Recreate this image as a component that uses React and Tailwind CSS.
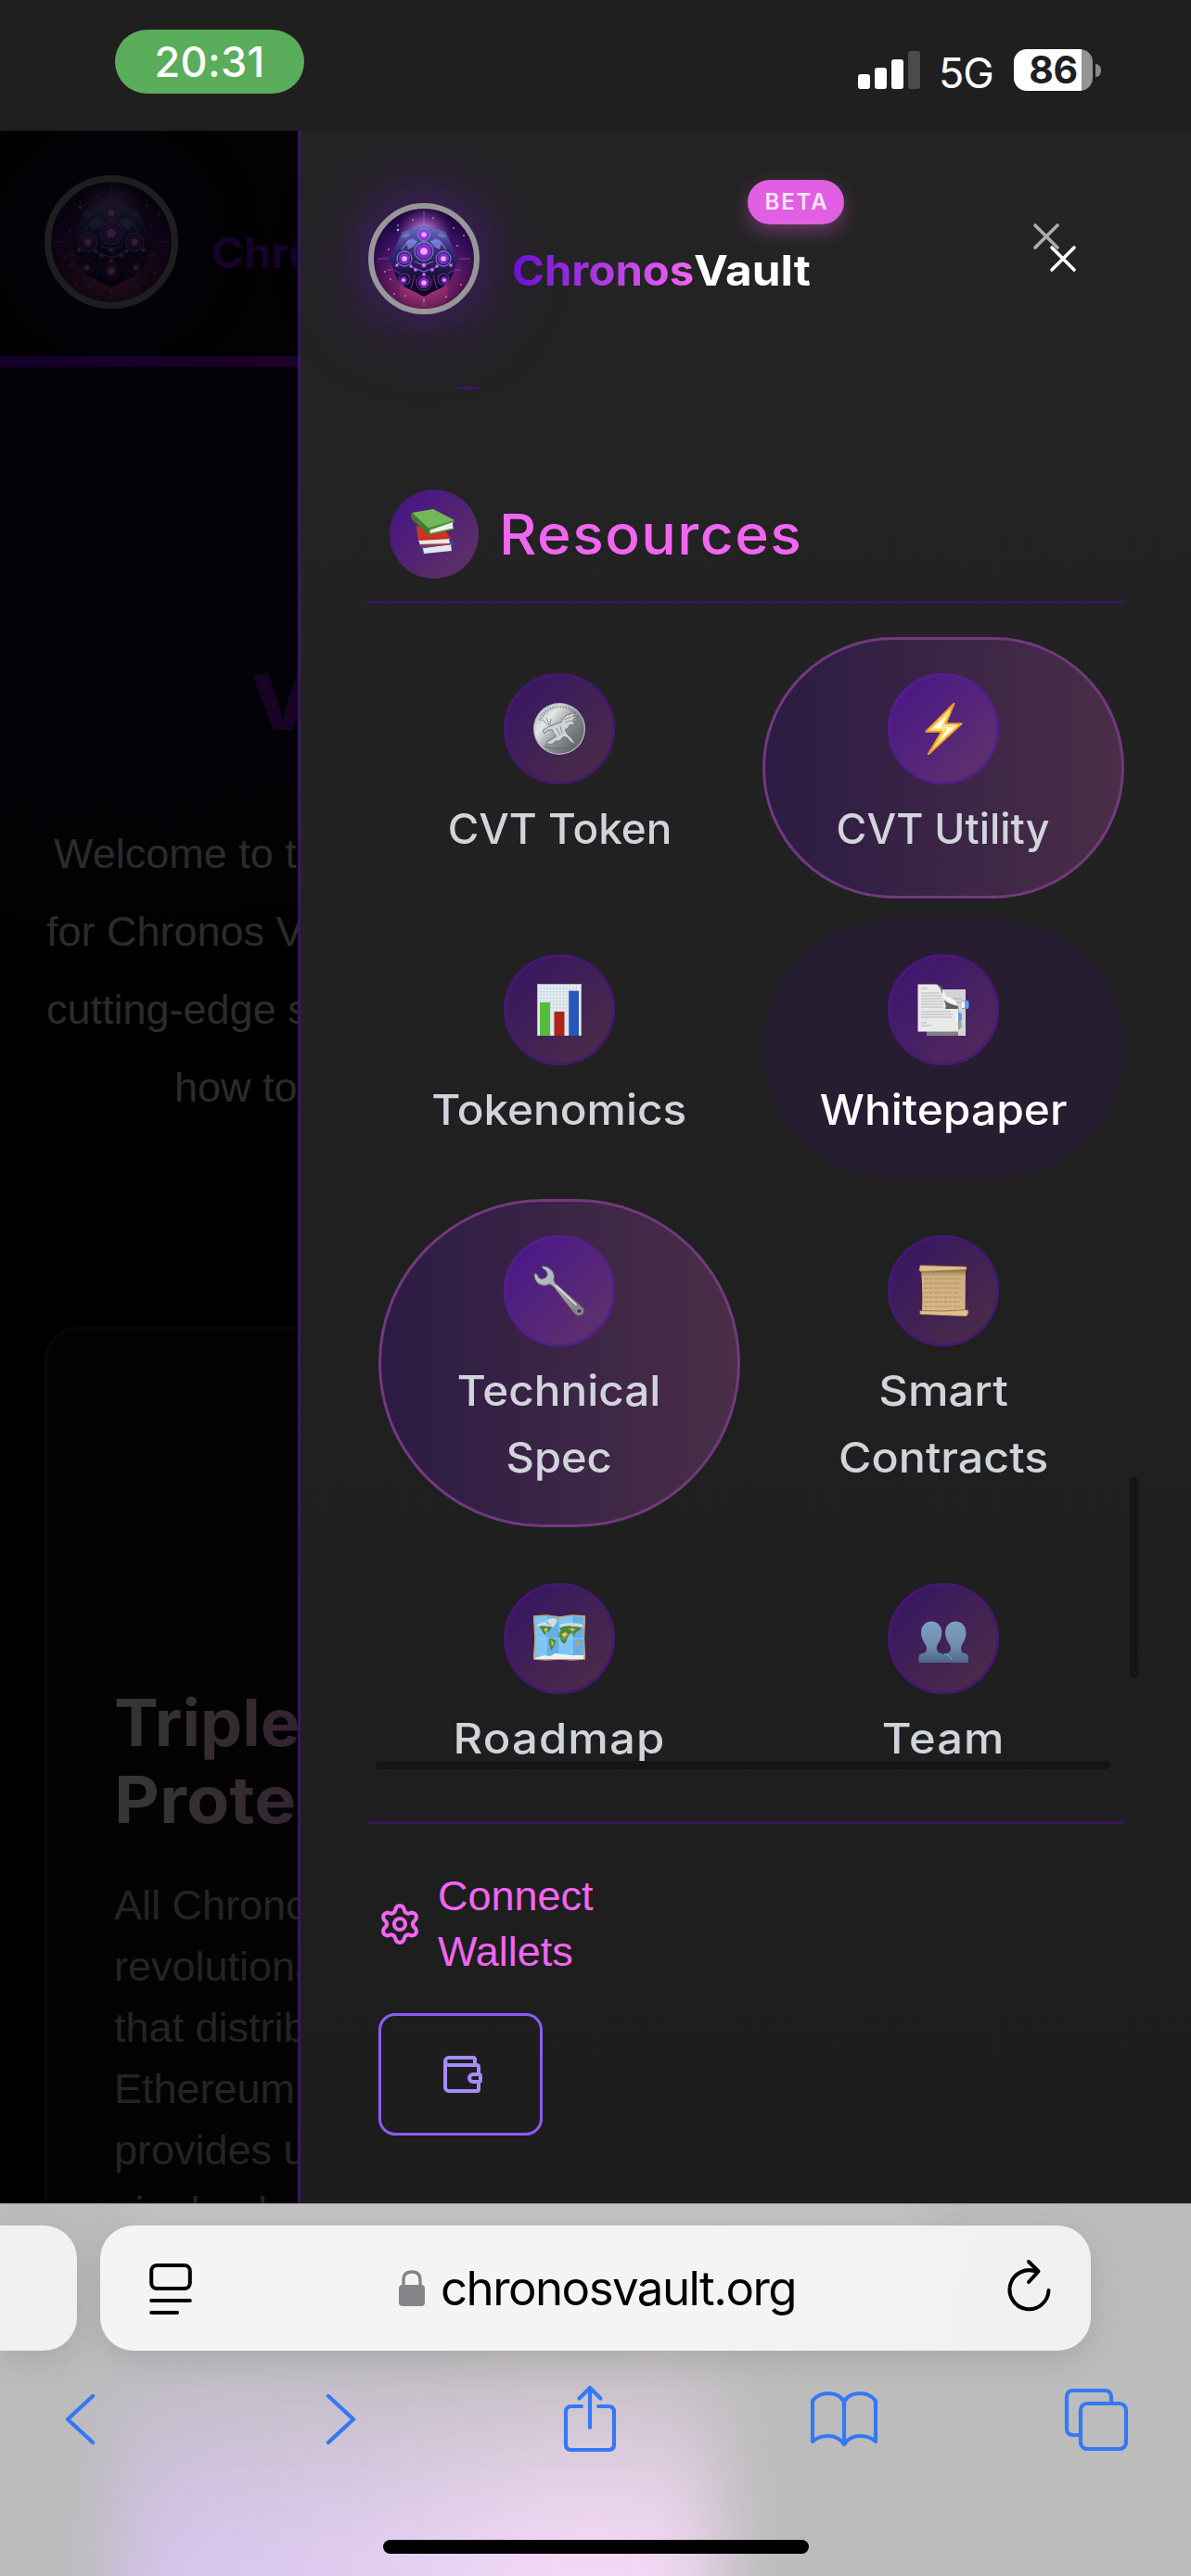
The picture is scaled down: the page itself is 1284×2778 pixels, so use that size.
import React from "react";
import { Settings, Wallet } from "lucide-react";

/* ---------- Brand orb ---------- */

const NODES = [
  [60, 34, 4], [60, 52, 5.5], [39, 60, 4], [81, 60, 4], [60, 86, 4],
  [38, 83, 2.5], [82, 83, 2.5], [60, 67, 2], [51, 72, 1.6], [69, 72, 1.6],
  [46, 68, 1.4], [74, 68, 1.4], [31, 67, 1.6], [89, 67, 1.6], [60, 77, 1.6],
];
const SPARKS = [
  [32, 24], [22, 50], [96, 46], [92, 27], [40, 100], [84, 101], [18, 74],
  [103, 35], [70, 16], [28, 98], [60, 105], [24, 82], [100, 88], [48, 18],
];

function Orb({ id, className }) {
  return (
    <svg viewBox="0 0 120 120" className={className}>
      <defs>
        <linearGradient id={id + "bg"} x1="0" y1="0" x2="0" y2="1">
          <stop offset="0" stopColor="#1d0a45" />
          <stop offset="0.4" stopColor="#43136f" />
          <stop offset="0.7" stopColor="#75206f" />
          <stop offset="1" stopColor="#b03575" />
        </linearGradient>
        <radialGradient id={id + "edge"}>
          <stop offset="0.6" stopColor="#10042a" stopOpacity="0" />
          <stop offset="1" stopColor="#10042a" stopOpacity="0.6" />
        </radialGradient>
        <radialGradient id={id + "glow"}>
          <stop offset="0" stopColor="#ffb0ff" />
          <stop offset="1" stopColor="#d95cff" stopOpacity="0" />
        </radialGradient>
        <linearGradient id={id + "ball"} x1="0" y1="0" x2="0" y2="1">
          <stop offset="0" stopColor="#6d6fc4" />
          <stop offset="0.35" stopColor="#382a78" />
          <stop offset="0.7" stopColor="#1c1038" />
          <stop offset="1" stopColor="#0d0418" />
        </linearGradient>
      </defs>
      <circle cx="60" cy="60" r="57" fill={"url(#" + id + "bg)"} />
      <circle cx="60" cy="30" r="30" fill={"url(#" + id + "glow)"} opacity="0.8" />
      <circle cx="60" cy="96" r="26" fill="#f04a96" opacity="0.28" />
      <circle cx="60" cy="60" r="57" fill={"url(#" + id + "edge)"} />
      <path d="M60 8V112M10 60H110M20 72H100" stroke="#c77bff" strokeWidth="0.7" opacity="0.6" />
      <path
        d="M60 24L71 27L83 31L88 41L92 50L95 56L99 60L95 65L92 75L88 84L80 91L69 96L60 101L51 96L40 91L32 84L28 75L25 65L21 60L25 56L28 50L32 41L37 31L49 27Z"
        fill={"url(#" + id + "ball)"}
      />
      <g fill="none" stroke="#8a86df" strokeWidth="1.3" opacity="0.75">
        <circle cx="60" cy="52" r="10" />
        <circle cx="39" cy="60" r="8" />
        <circle cx="81" cy="60" r="8" />
        <circle cx="60" cy="34" r="6.5" />
        <path d="M36 50L44 40L52 43M84 50L76 40L68 43M44 68L60 74L76 68M50 63L60 67L70 63" />
      </g>
      <g fill="none" stroke="#5a3aa0" strokeWidth="1.2" opacity="0.8">
        <circle cx="60" cy="86" r="8" />
        <circle cx="39" cy="82" r="6" />
        <circle cx="81" cy="82" r="6" />
        <path d="M46 92L50 78M74 92L70 78M28 72L34 76M92 72L86 76" />
      </g>
      <path d="M41 42L47 38L53 41L49 47L43 50ZM79 42L73 38L67 41L71 47L77 50Z" fill="#7f8fdc" opacity="0.75" />
      <path d="M35 36L42 32L46 34L40 38ZM85 36L78 32L74 34L80 38Z" fill="#6d84c8" opacity="0.75" />
      {NODES.map(([x, y, r]) => (
        <g key={x + "-" + y}>
          <circle cx={x} cy={y} r={r * 1.5} fill="#9a35ee" opacity="0.7" />
          <circle cx={x} cy={y} r={r * 0.7} fill="#ffa0f0" />
        </g>
      ))}
      {SPARKS.map(([x, y]) => (
        <circle key={x + "s" + y} cx={x} cy={y} r="0.9" fill="#f06ac8" />
      ))}
      <circle cx="32" cy="29" r="1.2" fill="#7ad7ff" />
      <circle cx="60" cy="60" r="57" fill="none" stroke="#979797" strokeWidth="6" />
    </svg>
  );
}

/* ---------- Pictograms ---------- */

const Books = () => (
  <svg viewBox="0 0 48 50" className="h-[50px] w-12">
    <path d="M0 18L5 20L10 40L14 49L44 45L45 34L30 26L6 20Z" fill="#2b46a0" />
    <path d="M13 42L43 38L44 45L14 48Z" fill="#e4e6ea" />
    <path d="M12 41L44 36L45 38L14 42Z" fill="#3453b8" />
    <path d="M6 18L38 24L42 31L8 33Z" fill="#cf3324" />
    <path d="M8 33L41 31L42 38L10 39Z" fill="#e9e6e4" />
    <path d="M7 32L43 30V32L9 34ZM9 38L42 37V38.500L11 40Z" fill="#c33022" />
    <path d="M1 4L24 0L47 12L20 22Z" fill="#74b65a" />
    <path d="M1 4L20 22L19 28L2 12Q-1 8 1 4Z" fill="#3c7c2c" />
    <path d="M20 21L46 13Q44 17 46 21L21 27Z" fill="#f0f0ee" />
    <path d="M19 20L47 12V13.500L21 22.500Q19 24 21 26L46 20.500V22L19 28Z" fill="#4a8f37" />
  </svg>
);

const Coin = () => (
  <svg viewBox="0 0 56 56" className="size-14">
    <defs>
      <linearGradient id="coin" x1="0" y1="0" x2="1" y2="0.8">
        <stop offset="0" stopColor="#a9adb0" />
        <stop offset="0.32" stopColor="#e2e7ea" />
        <stop offset="0.62" stopColor="#8b8f92" />
        <stop offset="1" stopColor="#5c5f62" />
      </linearGradient>
    </defs>
    <circle cx="28" cy="28" r="28" fill="#b9bcbe" />
    <circle cx="28" cy="28" r="26.800" fill="url(#coin)" />
    <path d="M7 19A23 23 0 0 1 46 12" fill="none" stroke="#6d7174" strokeWidth="3" strokeDasharray="1.500 1.300" opacity="0.6" />
    <path d="M10 30Q16 25 21 24Q25 22 30 21Q30 17 36 13L46 10L43 14L49 15L43 17L49 19L42 20L46 23L39 24Q38 28 34 29Q36 34 41 38L46 45L40 42L37 38Q33 35 31 38Q29 42 24 41L20 45L17 44L13 46L15 42L20 39L25 36Q21 33 20 29Q15 28 12 33Z" fill="#cfd3d6" stroke="#6a6e71" strokeWidth="0.900" />
    <path d="M10 18L15 24M14 16L17 24M19 17L18 24M33 18L44 14M34 21L45 18M25 27L29 35M29 25L31 33" stroke="#8d9194" strokeWidth="1" />
    <path d="M12 47Q28 52 44 46" stroke="#66696c" strokeWidth="1" fill="none" />
    <path d="M40 34H50" stroke="#6f7376" strokeWidth="2.500" strokeDasharray="1.500 1" />
  </svg>
);

const Bolt = () => (
  <svg viewBox="0 0 56 56" className="size-14">
    <path d="M39.300 1L30.500 22.500H47.500L11.900 55.200L26.500 30.800H9.500Z" fill="#fff3a6" stroke="#ee9d2e" strokeWidth="2.200" strokeLinejoin="round" />
    <path d="M35 10L26.500 25.500H42L20 46L31 28.300H14Z" fill="#ffffea" stroke="#fbd95a" strokeWidth="1.500" />
  </svg>
);

const Chart = () => (
  <svg viewBox="0 0 56 56" className="size-14">
    <rect x="4.500" y="0.500" width="47" height="55.500" fill="#e9eef1" stroke="#b9b0bd" />
    <path d="M8 1V56M11.500 1V56M15 1V56M18.500 1V56M22 1V56M25.500 1V56M29 1V56M32.500 1V56M36 1V56M39.500 1V56M43 1V56M46.500 1V56M5 5H51M5 8.500H51M5 12H51M5 15.500H51M5 19H51M5 22.500H51M5 26H51M5 29.500H51M5 33H51M5 36.500H51M5 40H51M5 43.500H51M5 47H51M5 50.500H51" stroke="#c3d3df" strokeWidth="0.700" />
    <path d="M7 20H18V56H7Z" fill="#56bb3c" />
    <path d="M22.500 30H33.500V56H22.500Z" fill="#af2318" />
    <path d="M38.200 7.500H49V56H38.200Z" fill="#2558b8" />
  </svg>
);

const Pages = () => (
  <svg viewBox="0 0 56 56" className="size-14">
    <path d="M10 6H52V56H10Z" fill="#d4d4d4" />
    <path d="M10 51H44V56H10Z" fill="#818181" />
    <path d="M43 20L48 46L43 51Z" fill="#9c9c9c" />
    <path d="M36 16H48M40 20H48" stroke="#a8a8a8" />
    <path d="M0.500 0.500H20Q26 1 27 8L29 14Q40 14 44 24V51.500H0.500Z" fill="#e9e9e9" />
    <path d="M20 0.500Q24 2 25 8Q28 18 44 24Q40 14 31 14Q27 2 20 0.500Z" fill="#f7f7f7" />
    <path d="M20 0Q26 1 27 6L27 12Q25 3 20 0ZM28 17Q34 22 44 24V27H30Q32 22 28 17Z" fill="#5e5e5e" />
    <path d="M4 5H11M4 10H24M4 13H26M4 16H27M4 19H28M4 22H28M4 25H28M4 30H36M4 33H38M4 36H37M4 42H10M4 45H15" stroke="#b8b8b8" strokeWidth="1.200" />
    <path d="M48.500 18H54Q55.500 18 55.500 20V25Q55.500 27 54 27H48.500ZM44 31H46Q48 31 48 33V38Q48 40 46 40H44Z" fill="#5f9ce6" />
    <path d="M48 19H51V26H48ZM41 32H44V40H41Z" fill="#f4f6fa" />
  </svg>
);

const Wrench = () => (
  <svg viewBox="0 0 56 56" className="size-14">
    <defs>
      <linearGradient id="steel" x1="0" y1="0" x2="1" y2="1">
        <stop offset="0" stopColor="#b9c9d6" />
        <stop offset="0.5" stopColor="#a9a9b0" />
        <stop offset="1" stopColor="#7d7273" />
      </linearGradient>
    </defs>
    <path
      d="M9 1Q16 1 21 7Q24 12 22 17L24 20L50 43Q55 46 55 50Q54 55 49 55Q45 55 43 51L22 24L18 21Q12 24 6 21Q0 16 1 9L4 10Q6 16 10 15Q15 14 15 10Q15 6 10 4Z"
      fill="url(#steel)" stroke="#58505f" strokeWidth="1"
    />
    <path d="M25 23L46 43" stroke="#e3e3e8" strokeWidth="1.600" strokeLinecap="round" />
    <ellipse cx="49.500" cy="49.800" rx="3" ry="2.700" fill="#543068" stroke="#c4bcc4" strokeWidth="0.800" />
  </svg>
);

const Scroll = () => (
  <svg viewBox="0 0 56 56" className="size-14">
    <defs>
      <linearGradient id="paper" x1="0" y1="0" x2="0" y2="1">
        <stop offset="0" stopColor="#9b7a50" />
        <stop offset="0.15" stopColor="#cfae7e" />
        <stop offset="1" stopColor="#d8b888" />
      </linearGradient>
    </defs>
    <path d="M4 6H52L51.500 50H5Q6 28 4 6Z" fill="url(#paper)" />
    <path d="M3 0.500L53 2V5.500L4 7.500Q1 7 2 4Z" fill="#e0bd8c" stroke="#82603d" strokeWidth="0.800" />
    <path d="M2.500 49.500Q28 51 53 48.500Q56 49 55 52L53 55.500L3 53.500Z" fill="#e2c08f" stroke="#82603d" strokeWidth="0.800" />
    <path d="M7 15H47M7 20H46M7 25H48M7 30H45M7 35H48M7 40H46M7 45H48" stroke="#b08c60" strokeWidth="1.200" strokeDasharray="5 1 3 1.500" />
  </svg>
);

const WorldMap = () => (
  <svg viewBox="0 0 56 56" className="size-14">
    <path d="M0.500 4L14 3L28 5L42 3L55.500 4L54.500 28L55.500 50L42 51L28 50L14 51L0.500 50L2 28Z" fill="#7cc6f5" stroke="#c79f74" strokeWidth="1.500" />
    <path d="M14 4L28 6V50L14 50ZM42 4L54 5V49L42 50Z" fill="#4a95cf" opacity="0.45" />
    <path d="M14 8Q22 4 26 8Q24 14 21 16L17 12ZM4 13L12 10L18 14L20 12L22 15H4ZM28 13L38 11L52 12L54 16L44 15L30 17Z" fill="#d6dbdb" />
    <path d="M6 15Q12 13 20 16L17 20L13 22L15 25L11 23Q9 18 6 15ZM17 28Q22 27 24 31Q22 38 19 41Q17 34 17 28ZM28 17Q34 13 44 15L52 16Q50 20 46 21L44 26L41 22L38 24L36 30Q34 36 31 32L27 26Q26 21 30 20Z" fill="#4b873b" />
    <path d="M11 17L16 18L13 21ZM19 30L22 32L20 37ZM30 23L35 21L37 24L33 27ZM38 17L46 18L42 20Z" fill="#e9c556" />
    <path d="M45 32L50 31L50 35L45 35Z" fill="#e59a3d" />
    <path d="M2 49L12 46L18 47L24 44L40 46L54 46V50H2Z" fill="#eef3f5" />
    <path d="M1 28H55M14 4V50M28 6V50M42 4V50" stroke="#a8def8" strokeWidth="0.700" opacity="0.700" />
  </svg>
);

const People = () => (
  <svg viewBox="0 0 56 56" className="size-14">
    <defs>
      <linearGradient id="silhouette" x1="0" y1="9" x2="0" y2="54" gradientUnits="userSpaceOnUse">
        <stop offset="0" stopColor="#7e9fc0" />
        <stop offset="0.6" stopColor="#6f8daf" />
        <stop offset="1" stopColor="#4b678a" />
      </linearGradient>
    </defs>
    <path
      d="M15.300 9.500C22 9.500 26.500 15 26.300 22C26 29 22.500 33 21 36Q20 42 24 43.500L28.500 45L33 43.500Q37 42 35.500 36C34 33 30.300 29 30 22C29.800 15 34.500 9.500 41.300 9.500C48 9.500 52.800 15 52.500 22C52.300 29 49 33 47.500 36Q46 42 49.500 43.500L53 44.500Q55 45.500 55 48V54H1.500V48Q1.500 45.500 3.500 44.500L7.500 43.500Q11 42 9.500 36C8 33 4.300 29 4 22C3.800 15 8.500 9.500 15.300 9.500Z"
      fill="url(#silhouette)"
    />
    <path d="M29 44.800Q36 46 37 51" fill="none" stroke="#8facca" strokeWidth="0.900" />
  </svg>
);

/* ---------- Status bar ---------- */

function StatusBar() {
  return (
    <header className="flex h-[141px] shrink-0 items-start bg-[#1f1f1f] text-white">
      <div className="mt-8 ml-[124px] flex h-[69px] w-[204px] items-center justify-center rounded-full bg-[#59ad5b] text-[45px] leading-none font-medium tracking-[0.3px]">
        20:31
      </div>
      <div className="mt-[55px] ml-[597px] flex h-[41px] items-end gap-[5px]">
        <i className="h-4 w-[13px] rounded-[3px] bg-white" />
        <i className="h-[23px] w-[13px] rounded-[3px] bg-white" />
        <i className="h-8 w-[13px] rounded-[3px] bg-white" />
        <i className="h-[41px] w-[13px] rounded-[3px] bg-[#4b4b4b]" />
      </div>
      <div className="mt-[54px] ml-[20px] w-[81px] text-[45px] leading-[50px] font-normal tracking-[-1.2px]">5G</div>
      <div className="mt-[53px] flex items-center gap-[3px]">
        <div className="flex h-[45px] w-[85px] items-center justify-center rounded-[14px] bg-[linear-gradient(90deg,#fff_73px,#949494_73px)] text-[41px] leading-none font-bold tracking-[-0.5px] text-[#1f1f1f]">
          86
        </div>
        <i className="h-3.5 w-1.5 rounded-r-full bg-[#8a8a8a]" />
      </div>
    </header>
  );
}

/* ---------- Dimmed page behind the drawer ---------- */

function PageBehind() {
  return (
    <div className="w-[321px] shrink-0 overflow-hidden bg-black whitespace-nowrap">
      <div className="flex h-[243px] items-start bg-[#020203] pt-12 pl-12">
        <div className="size-36 shrink-0 rounded-full shadow-[0_0_90px_10px_rgba(60,10,110,0.16)]">
          <Orb id="back" className="size-36 opacity-[0.19]" />
        </div>
        <div className="mt-[54px] ml-9 origin-left scale-x-[1.05] text-[45px] leading-[60px] font-bold text-[#17022c]">Chronos</div>
      </div>
      <div className="h-3 bg-[linear-gradient(90deg,#15002a,#1b0028)]" />
      <div className="h-[1035px] bg-[radial-gradient(ellipse_900px_640px_at_30%_0%,#050209_0%,#030207_60%,#020204_90%,#000_100%)]">
        <h1 className="origin-left scale-x-[1.08] pt-[311px] pl-[250px] text-[83px] leading-[100px] font-extrabold text-[#180326]">Vault</h1>
        <p className="pt-[72px] pl-[50px] font-['Liberation_Sans',sans-serif] text-[45px] leading-[84px] text-[#2b2b2b]">
          <span className="block pl-[8px]">Welcome to the</span>
          <span className="block">for Chronos Vault</span>
          <span className="block">cutting-edge security</span>
          <span className="block pl-[138px]">how to use</span>
        </p>
      </div>
      <div className="ml-12 h-[1000px] w-[600px] rounded-tl-[36px] border-[3px] border-[#080808] bg-[#030303] pt-[382px] pl-[72px]">
        <h2 className="flex flex-col items-start text-[70px] leading-[83px] font-bold text-transparent">
          <span className="origin-left scale-x-[1.025] bg-[linear-gradient(90deg,#353535_10%,#34222f)] bg-clip-text">Triple</span>
          <span className="origin-left scale-x-[1.08] bg-[linear-gradient(90deg,#353535_10%,#34222f_85%)] bg-clip-text">Protect</span>
        </h2>
        <p className="pt-[40px] font-['Liberation_Sans',sans-serif] text-[45px] leading-[66px] text-[#242424]">
          All Chronos
          <br />
          revolutionary
          <br />
          that distributes
          <br />
          Ethereum
          <br />
          provides un
          <br />
          single-chain
        </p>
      </div>
    </div>
  );
}

/* ---------- Drawer ---------- */

const ITEMS = [
  { icon: Coin, lines: [["CVT Token", "scale-x-[1.02]"]] },
  { icon: Bolt, state: "active", lines: [["CVT Utility", "scale-x-[0.995]"]] },
  { icon: Chart, lines: [["Tokenomics", "scale-x-[1.06]"]] },
  { icon: Pages, state: "hover", lines: [["Whitepaper", "scale-x-[1.065]"]] },
  { icon: Wrench, state: "active", lines: [["Technical", "scale-x-[1.06]"], ["Spec", "scale-x-[1.045]"]] },
  { icon: Scroll, lines: [["Smart", "scale-x-[1.09]"], ["Contracts", "scale-x-[1.075]"]] },
  { icon: WorldMap, lines: [["Roadmap", "tracking-[1px] scale-x-[1.09]"]] },
  { icon: People, lines: [["Team", "tracking-[1px] scale-x-[1.085]"]] },
];

const CARD = {
  active: "border-[#73397f] bg-[linear-gradient(90deg,#2c1b44,#4a2e48)] text-[#d1d5db]",
  hover: "my-[2px] border-y border-[#261e30] bg-[#261e30] text-white",
  idle: "border-transparent text-[#d1d5db]",
};
const DISC = {
  active: "border-[#53208a] bg-[linear-gradient(135deg,#4b1888_10%,#5f316c_90%)]",
  hover: "border-[#4a1976] bg-[linear-gradient(135deg,#3e1670_10%,#50295a_90%)]",
  idle: "border-[#44196e] bg-[linear-gradient(135deg,#381762_10%,#4a2c48_90%)]",
};

function Tile({ icon: Icon, state = "idle", lines }) {
  return (
    <a className={"flex flex-col items-center rounded-full border-[3px] py-9 text-[45px] leading-[72px] font-medium " + CARD[state]}>
      <span className={"mb-3 flex size-[120px] items-center justify-center rounded-full border-[3px] " + DISC[state]}>
        <Icon />
      </span>
      {lines.map(([text, cls]) => (
        <span key={text} className={cls}>{text}</span>
      ))}
    </a>
  );
}

function Drawer() {
  return (
    <aside className="relative flex w-[963px] shrink-0 flex-col border-l-[3px] border-[#34185a] bg-[linear-gradient(180deg,#242424,#1d1d1d)]">
      <div className="relative flex h-[276px] shrink-0 items-start pt-[78px] pl-[73px]">
        <div className="size-[120px] rounded-full bg-[#1d0a45] shadow-[0_0_45px_rgba(107,30,190,0.28),0_0_90px_8px_rgba(107,20,200,0.36)]">
          <Orb id="front" className="size-[120px]" />
        </div>
        <div className="mt-[43px] ml-[35px] flex text-[45px] leading-[60px] font-bold">
          <span className="w-[196px]">
            <span className="inline-block origin-left scale-x-[1.05] bg-[linear-gradient(90deg,#6b0fd7,#f266f0)] bg-clip-text text-transparent">Chronos</span>
          </span>
          <span className="inline-block origin-left scale-x-[1.1] text-white">Vault</span>
        </div>
        <span className="absolute top-[53px] left-[482px] flex h-12 w-[104px] items-center justify-center rounded-full bg-[#e05fe2] pl-[2px] text-[24px] font-semibold tracking-[1.9px] text-[#f3e3f3] shadow-[0_8px_20px_rgba(224,95,226,0.35)]">
          BETA
        </span>
        <svg viewBox="0 0 60 60" className="absolute top-[97px] left-[787px] size-[60px]" fill="none" strokeWidth="3.600" strokeLinecap="round">
          <path d="M5 5L29 29M29 5L5 29" stroke="#adadad" />
          <path d="M23 29L47 53M47 29L23 53" stroke="#fff" />
        </svg>
      </div>

      <nav className="h-[1486px] shrink-0 overflow-hidden pr-[72px] pl-[72px]">
        <div className="-mt-[107px] ml-[52px] size-[110px] rounded-full bg-[#40176a]" />
        <div className="mt-[108px] flex h-[123px] items-start border-b-[3px] border-[#37175c] pl-6">
          <span className="flex size-24 items-center justify-center rounded-full bg-[linear-gradient(135deg,#4a1684_15%,#5d3163_90%)] pr-[2px] pb-[4px]">
            <Books />
          </span>
          <h3 className="ml-[22px] origin-left scale-x-[1.04] text-[60px] leading-[96px] font-medium tracking-[1.4px] text-[#f166f0]">Resources</h3>
        </div>
        <div className="mt-9 grid grid-cols-2 gap-x-6 gap-y-[21px] pl-3">
          {ITEMS.map((item) => (
            <Tile key={item.lines[0][0]} {...item} />
          ))}
        </div>
      </nav>

      <div className="absolute top-[1452px] right-[57px] h-[217px] w-[9px] rounded-full bg-[#151515]" />
      <div className="absolute top-[1758px] right-[87px] h-[9px] w-[792px] rounded-full bg-[#151515]" />

      <footer className="mx-[72px] mt-[61px] border-t-[3px] border-[#35175a] pt-12 pl-3">
        <div className="flex items-center text-[#f166f0]">
          <Settings className="-ml-px size-12" strokeWidth={2.1} />
          <span className="ml-[17px] font-['Liberation_Sans',sans-serif] text-[45px] leading-[60px]">
            Connect
            <br />
            Wallets
          </span>
        </div>
        <button className="mt-9 flex h-[132px] w-[177px] items-center justify-center rounded-[18px] border-[3px] border-[#8b5cf6] pl-[3px] text-[#a78bfa]">
          <Wallet className="size-12" strokeWidth={2} />
        </button>
      </footer>
    </aside>
  );
}

/* ---------- Browser chrome ---------- */

function BrowserBar() {
  return (
    <footer className="relative isolate h-[402px] shrink-0 overflow-hidden border-t border-[#999] bg-[#bcbcbc]">
      <div className="absolute top-[150px] left-[125px] -z-10 blur-[40px]">
        <div className="h-[350px] w-[650px] bg-[linear-gradient(90deg,#d3c2ec,#e4cef2_45%,#f6daf8_75%,#f1d7f4)] [mask-image:linear-gradient(180deg,transparent,#0009_35%,#000_65%)]" />
      </div>
      <div className="absolute top-0 left-[140px] -z-10 h-[24px] w-[860px] bg-[#d0d0d0] opacity-70 blur-[18px]" />
      <div className="mt-[23px] flex h-[135px]">
        <div className="w-[83px] rounded-r-[36px] bg-[#f1f1f1] shadow-[0_10px_36px_rgba(0,0,0,0.11)]" />
        <div className="ml-[25px] flex w-[1068px] items-center rounded-[36px] bg-[linear-gradient(100deg,#f4f4f4,#f4f4f4_60%,#f0f0f0)] shadow-[0_10px_36px_rgba(0,0,0,0.11)]">
          <svg viewBox="0 0 46 56" className="ml-[53px] h-14 w-[46px]" fill="none" stroke="#000" strokeWidth="4" strokeLinecap="round">
            <rect x="2.200" y="3" width="41.600" height="25" rx="6" />
            <path d="M2.200 41H43.800M2.200 54H30" />
          </svg>
          <svg viewBox="0 0 28 39" className="ml-[223px] h-[39px] w-7">
            <path d="M5 18V11Q5 2 14 2Q23 2 23 11V18" fill="none" stroke="#858489" strokeWidth="3.400" />
            <rect x="0" y="16" width="28" height="23" rx="4" fill="#858489" />
          </svg>
          <span className="ml-[17px] w-[400px] text-[51px] leading-[70px] tracking-[-1.55px] text-black">chronosvault.org</span>
          <svg viewBox="0 0 48 58" className="ml-[211px] mb-[5px] h-[58px] w-12" fill="none" stroke="#000" strokeWidth="4" strokeLinecap="round" strokeLinejoin="round">
            <path d="M32 14A21 21 0 1 0 44.500 34" />
            <path d="M23 3L33.500 13.500L23 25" />
          </svg>
        </div>
      </div>
      <div className="mt-[36px] flex h-[76px] items-center text-[#3478f6]">
        <svg viewBox="0 0 34 58" className="ml-[69px] h-[58px] w-[34px]" fill="none" stroke="currentColor" strokeWidth="4.400" strokeLinecap="round" strokeLinejoin="round">
          <path d="M31 4L4 29L31 54" />
        </svg>
        <svg viewBox="0 0 34 58" className="ml-[247px] h-[58px] w-[34px]" fill="none" stroke="currentColor" strokeWidth="4.400" strokeLinecap="round" strokeLinejoin="round">
          <path d="M4 4L31 29L4 54" />
        </svg>
        <svg viewBox="0 0 60 76" className="ml-[222px] h-[76px] w-[60px]" fill="none" stroke="currentColor" strokeWidth="4.200" strokeLinecap="round" strokeLinejoin="round">
          <path d="M21 24H10Q4 24 4 30V65Q4 71 10 71H50Q56 71 56 65V30Q56 24 50 24H39" />
          <path d="M30 47V4M18.500 15.500L30 4L41.500 15.500" />
        </svg>
        <svg viewBox="0 0 76 66" className="ml-[206px] h-[66px] w-[76px]" fill="none" stroke="currentColor" strokeWidth="4.200" strokeLinecap="round" strokeLinejoin="round">
          <path d="M38 14Q33 5 21 5Q10 5 4 13V57Q10 51 21 51Q32 51 38 60Q44 51 55 51Q66 51 72 57V13Q66 5 55 5Q43 5 38 14V60" />
        </svg>
        <svg viewBox="0 0 70 70" className="ml-[199px] size-[70px]" fill="none" stroke="currentColor" strokeWidth="4.200" strokeLinejoin="round">
          <path d="M18 52H10Q3 52 3 45V11Q3 4 10 4H44Q51 4 51 11V18" />
          <rect x="18" y="18" width="49" height="49" rx="7" />
        </svg>
      </div>
      <div className="absolute top-[362px] left-[413px] h-[15px] w-[459px] rounded-full bg-black" />
    </footer>
  );
}

export default function App() {
  return (
    <div className="flex h-[2778px] w-[1284px] flex-col overflow-hidden bg-black font-['Inter',sans-serif]">
      <StatusBar />
      <main className="flex h-[2235px] shrink-0 overflow-hidden">
        <PageBehind />
        <Drawer />
      </main>
      <BrowserBar />
    </div>
  );
}
